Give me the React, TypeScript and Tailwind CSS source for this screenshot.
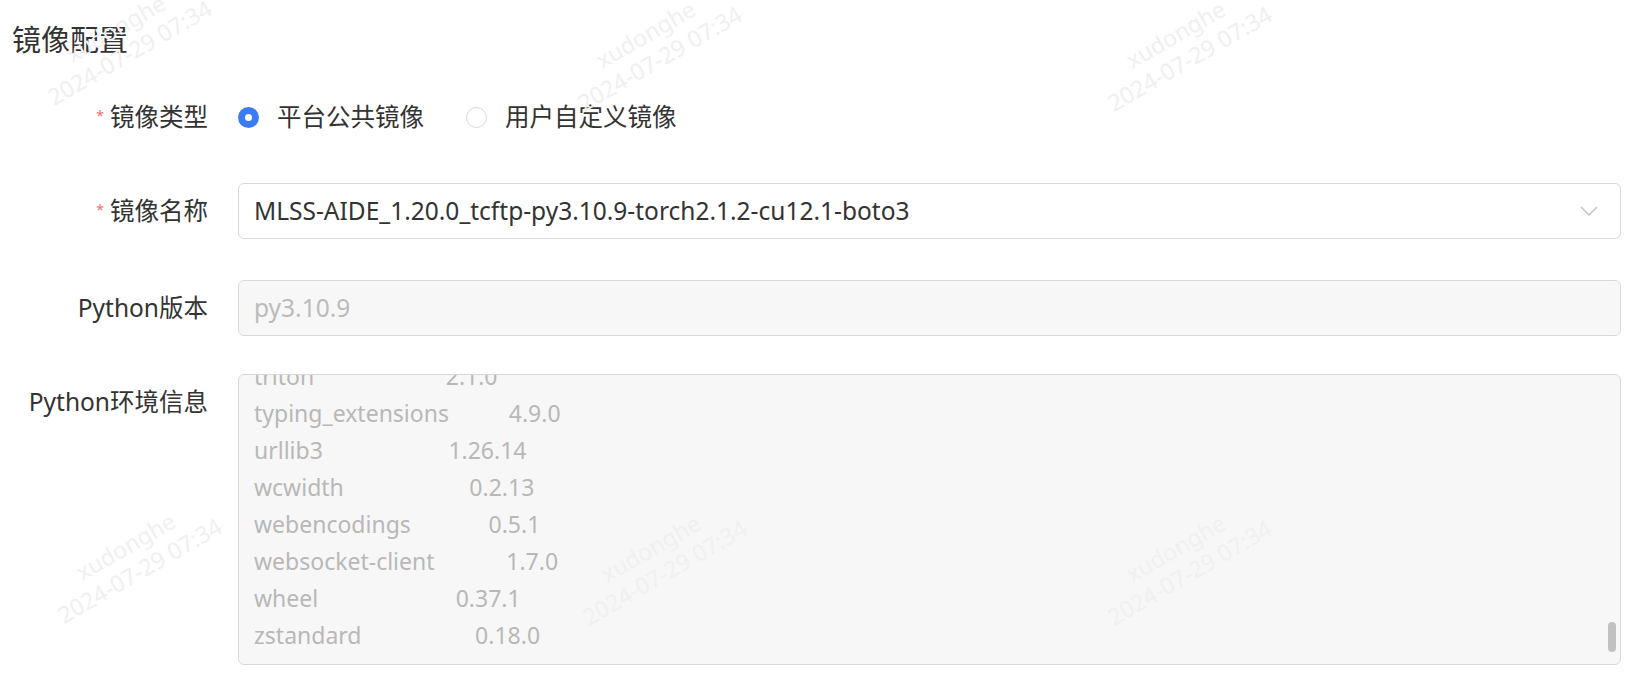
import React from 'react';

const packages = [
  { name: 'triton', pad: 22, version: '2.1.0' },
  { name: 'typing_extensions', pad: 10, version: '4.9.0' },
  { name: 'urllib3', pad: 21, version: '1.26.14' },
  { name: 'wcwidth', pad: 21, version: '0.2.13' },
  { name: 'webencodings', pad: 13, version: '0.5.1' },
  { name: 'websocket-client', pad: 12, version: '1.7.0' },
  { name: 'wheel', pad: 23, version: '0.37.1' },
  { name: 'zstandard', pad: 19, version: '0.18.0' },
];

const marks = [
  'left-[30px] top-[12px]',
  'left-[560px] top-[18px]',
  'left-[1090px] top-[18px]',
  'left-[40px] top-[530px]',
  'left-[565px] top-[532px]',
  'left-[1090px] top-[532px]',
];

function Label({ text, required }: { text: string; required?: boolean }) {
  return (
    <div className="w-[208px] shrink-0 h-[56px] flex items-center justify-end text-[24.5px] text-[#333]">
      {required && <span className="text-[#f56c6c] text-[14px] mr-[6px] mb-[4px]">*</span>}
      <span>{text}</span>
    </div>
  );
}

function Radio({ checked, label }: { checked?: boolean; label: string }) {
  return (
    <label className="flex items-center gap-[18px] cursor-pointer">
      {checked ? (
        <span className="w-[21px] h-[21px] rounded-full bg-[#3b7cf5] flex items-center justify-center">
          <span className="w-[7px] h-[7px] rounded-full bg-white" />
        </span>
      ) : (
        <span className="w-[21px] h-[21px] rounded-full border border-[#d9d9d9] bg-white" />
      )}
      <span className="text-[24.5px] text-[#333]">{label}</span>
    </label>
  );
}

export default function App() {
  return (
    <div
      className="relative w-full h-[688px] bg-white overflow-hidden"
      style={{ fontFamily: '"Noto Sans", "Noto Sans CJK SC", sans-serif' }}
    >
      <h2 className="pl-[12px] pt-[20px] text-[29px] leading-[40px] text-[#333] font-normal">镜像配置</h2>

      <div className="mt-[29px] flex flex-col">
        <div className="flex items-center gap-[30px]">
          <Label text="镜像类型" required />
          <div className="flex items-center gap-[42px]">
            <Radio checked label="平台公共镜像" />
            <Radio label="用户自定义镜像" />
          </div>
        </div>

        <div className="mt-[38px] flex items-center gap-[30px]">
          <Label text="镜像名称" required />
          <div className="w-[1383px] h-[56px] border border-[#d9d9d9] rounded-[6px] bg-white flex items-center justify-between pl-[15px] pr-[22px]">
            <span className="text-[24.5px] text-[#333]">MLSS-AIDE_1.20.0_tcftp-py3.10.9-torch2.1.2-cu12.1-boto3</span>
            <svg width="18" height="10" viewBox="0 0 18 10" fill="none">
              <path d="M1 1l8 8 8-8" stroke="#c0c0c0" strokeWidth="1.4" />
            </svg>
          </div>
        </div>

        <div className="mt-[41px] flex items-center gap-[30px]">
          <Label text="Python版本" />
          <div className="w-[1383px] h-[56px] border border-[#d9d9d9] rounded-[6px] bg-[#f7f7f7] flex items-center pl-[15px]">
            <span className="text-[24.5px] text-[#bbb]">py3.10.9</span>
          </div>
        </div>

        <div className="mt-[38px] flex items-start gap-[30px]">
          <Label text="Python环境信息" />
          <div className="relative w-[1383px] h-[291px] border border-[#d9d9d9] rounded-[6px] bg-[#f7f7f7] overflow-hidden flex flex-col justify-end pl-[15px] pb-[10px]">
            {packages.map((p) => (
              <div key={p.name} className="shrink-0 whitespace-pre text-[23px] leading-[37px] text-[#b8b8b8]">
                {p.name + ' '.repeat(p.pad) + p.version}
              </div>
            ))}
            <div className="absolute right-[4px] bottom-[12px] w-[8px] h-[30px] rounded-full bg-[#c1c1c1]" />
          </div>
        </div>
      </div>

      {marks.map((m, i) => (
        <div
          key={i}
          className={`pointer-events-none absolute ${m} -rotate-[30deg] text-[23px] leading-[28px] text-[#f0f0f0] text-center`}
        >
          <div>xudonghe</div>
          <div>2024-07-29 07:34</div>
        </div>
      ))}
    </div>
  );
}
